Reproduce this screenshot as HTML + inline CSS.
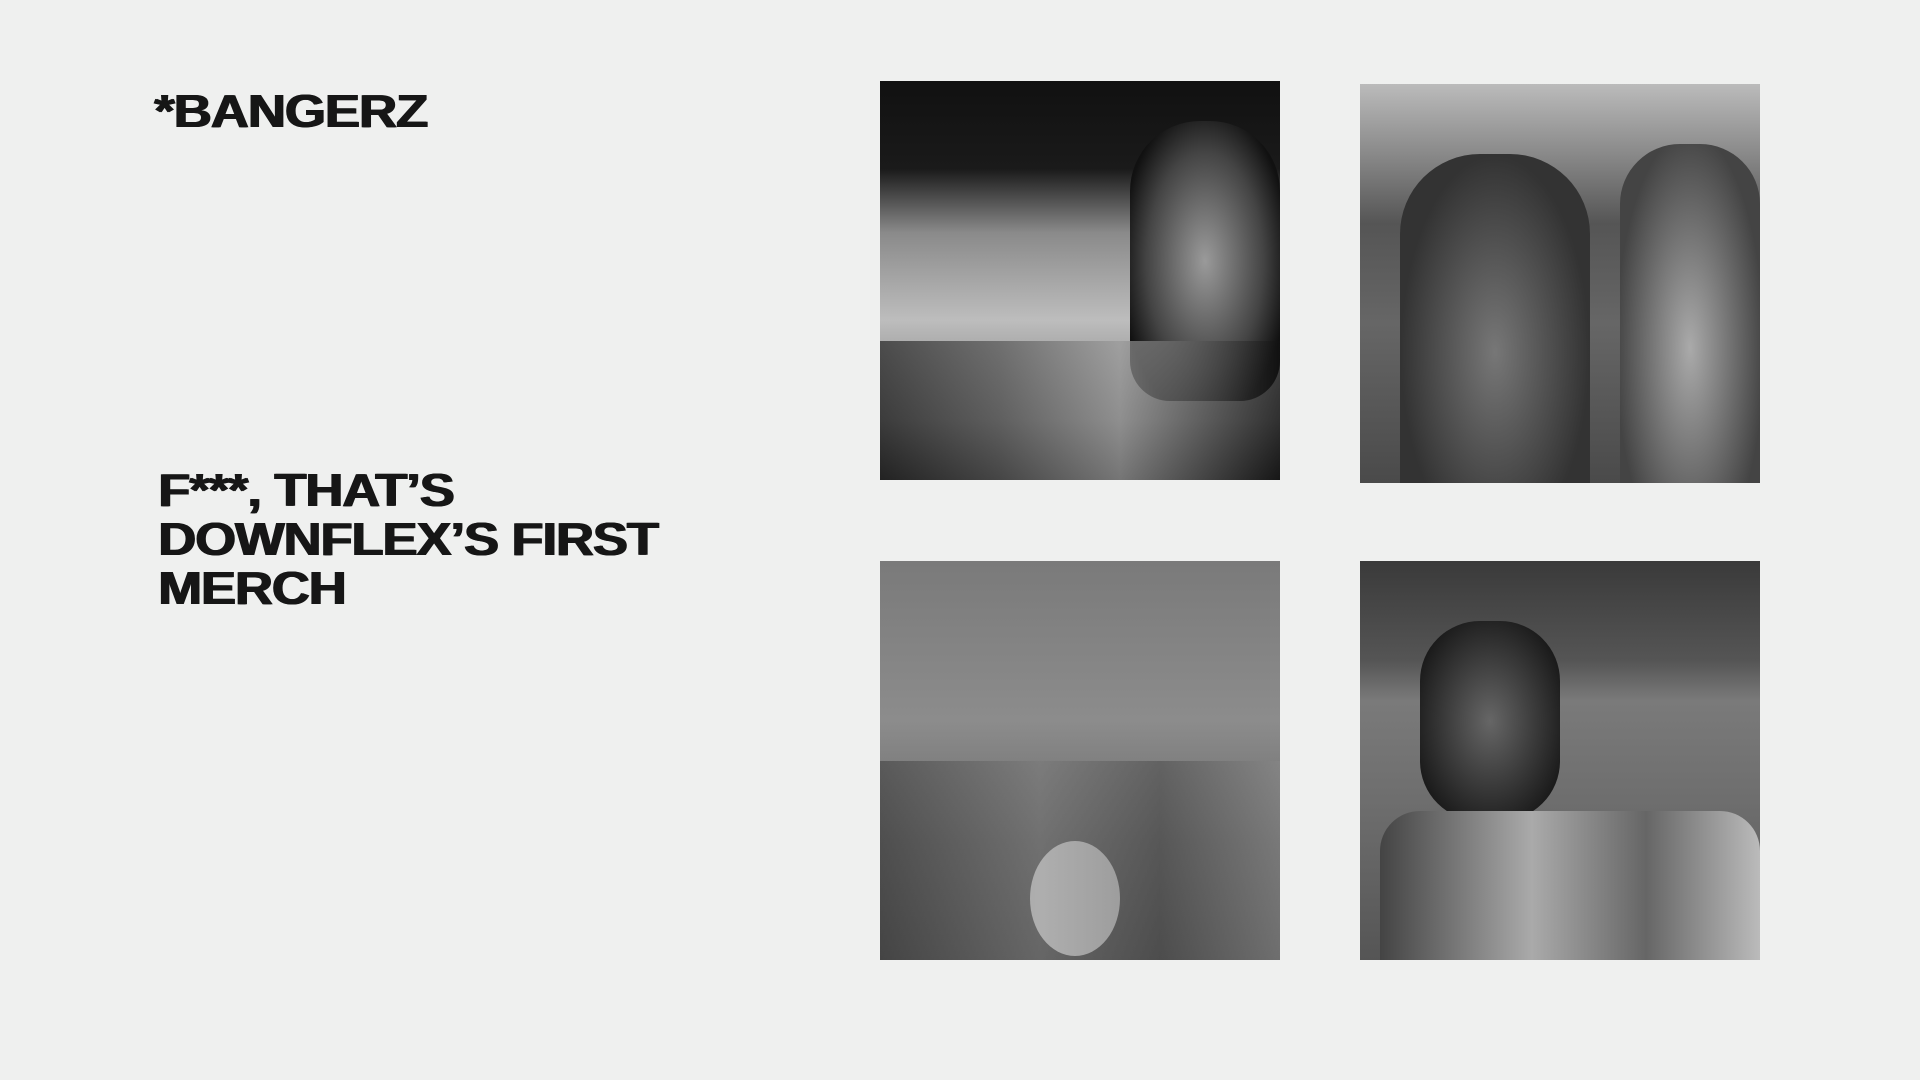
<!DOCTYPE html>
<html><head><meta charset="utf-8"><style>
html,body{margin:0;padding:0;}
body{width:1920px;height:1080px;background:#eff0ef;position:relative;overflow:hidden;font-family:"Liberation Sans",sans-serif;color:#161616;}
.logo{position:absolute;left:154px;top:84px;font-size:46px;font-weight:900;letter-spacing:-1px;transform:scaleX(1.15);transform-origin:0 0;text-shadow:1px 0 0 #161616,-0.5px 0 0 #161616;}
.h{position:absolute;left:158px;top:466px;font-size:46px;line-height:49px;font-weight:900;letter-spacing:-1px;text-transform:uppercase;transform:scaleX(1.145);transform-origin:0 0;text-shadow:1px 0 0 #161616,-0.5px 0 0 #161616;white-space:nowrap;}
.img{position:absolute;width:400px;height:399px;overflow:hidden;}
</style></head><body>
<div class="logo">*BANGERZ</div>
<div class="h">F***, THAT’S<br>DOWNFLEX’S FIRST<br>MERCH</div>
<div class="img" style="left:880px;top:81px;background:linear-gradient(180deg,#111 0%,#1a1a1a 22%,#8a8a8a 38%,#bdbdbd 60%,#777 85%,#222 100%);">
 <div style="position:absolute;left:250px;top:40px;width:150px;height:280px;border-radius:70px 70px 40px 40px;background:radial-gradient(ellipse at 50% 50%,#9a9a9a,#444 55%,#111 80%);"></div>
 <div style="position:absolute;left:0;top:260px;width:400px;height:140px;background:linear-gradient(90deg,#222 0%,#555 30%,#999 60%,#111 100%);opacity:.7"></div>
</div>
<div class="img" style="left:1360px;top:84px;background:linear-gradient(180deg,#bbb 0%,#888 18%,#555 35%,#666 60%,#4a4a4a 100%);">
 <div style="position:absolute;left:40px;top:70px;width:190px;height:330px;background:radial-gradient(ellipse at 50% 60%,#777,#333 70%);border-radius:80px 80px 0 0"></div>
 <div style="position:absolute;left:260px;top:60px;width:140px;height:340px;background:radial-gradient(ellipse at 50% 60%,#aaa,#444 75%);border-radius:60px 60px 0 0"></div>
</div>
<div class="img" style="left:880px;top:561px;background:linear-gradient(180deg,#7a7a7a 0%,#8c8c8c 40%,#6a6a6a 70%,#555 100%);">
 <div style="position:absolute;left:150px;top:280px;width:90px;height:115px;border-radius:50%;background:#e6e6e6"></div>
 <div style="position:absolute;left:0;top:200px;width:400px;height:200px;background:linear-gradient(90deg,#333,#777 40%,#444 70%,#888);opacity:.5"></div>
</div>
<div class="img" style="left:1360px;top:561px;background:linear-gradient(180deg,#3a3a3a 0%,#555 25%,#7a7a7a 35%,#6e6e6e 60%,#555 100%);">
 <div style="position:absolute;left:60px;top:60px;width:140px;height:200px;border-radius:60px;background:radial-gradient(ellipse at 50% 50%,#666,#1a1a1a 80%)"></div>
 <div style="position:absolute;left:20px;top:250px;width:380px;height:150px;background:linear-gradient(90deg,#444,#aaa 40%,#666 70%,#bbb);border-radius:40px 40px 0 0"></div>
</div>
</body></html>
